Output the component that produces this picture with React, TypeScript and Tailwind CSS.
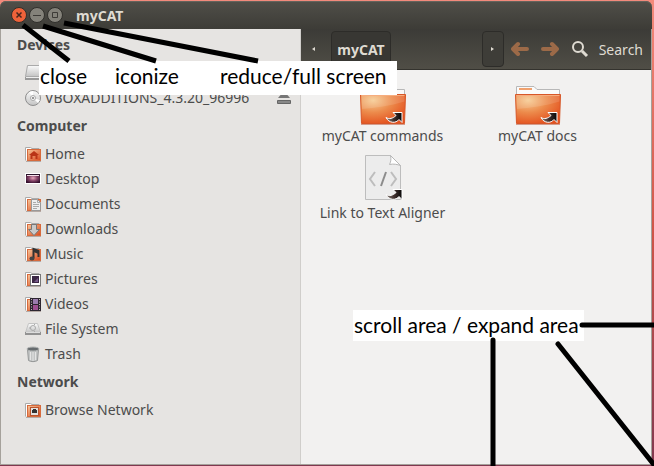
import type { ReactNode } from "react";

type Glyph = "home" | "desktop" | "documents" | "downloads" | "music" | "pictures" | "videos" | "disk" | "trash" | "network" | "drive" | "disc";

const computer: { label: string; icon: Glyph }[] = [
  { label: "Home", icon: "home" },
  { label: "Desktop", icon: "desktop" },
  { label: "Documents", icon: "documents" },
  { label: "Downloads", icon: "downloads" },
  { label: "Music", icon: "music" },
  { label: "Pictures", icon: "pictures" },
  { label: "Videos", icon: "videos" },
  { label: "File System", icon: "disk" },
  { label: "Trash", icon: "trash" },
];

function Gradients() {
  return (
    <svg className="absolute size-0" aria-hidden="true">
      <defs>
        <linearGradient id="smallFolder" x1="0" y1="0" x2="1" y2="1">
          <stop offset="0" stopColor="#f6c79b" />
          <stop offset="1" stopColor="#d9481c" />
        </linearGradient>
        <radialGradient id="folder" cx="0.28" cy="0.2" r="0.85">
          <stop offset="0" stopColor="#f6cb92" />
          <stop offset="0.5" stopColor="#ec8a4b" />
          <stop offset="1" stopColor="#e4521f" />
        </radialGradient>
        <linearGradient id="metal" x1="0" y1="0" x2="0" y2="1">
          <stop offset="0" stopColor="#fafafa" />
          <stop offset="1" stopColor="#c4c4c4" />
        </linearGradient>
        <radialGradient id="wallpaper" cx="0.5" cy="0.45" r="0.6">
          <stop offset="0" stopColor="#e9a9bd" />
          <stop offset="0.5" stopColor="#88466a" />
          <stop offset="1" stopColor="#35102d" />
        </radialGradient>
        <linearGradient id="linkArrow" x1="0" y1="0" x2="1" y2="0">
          <stop offset="0" stopColor="#8d8580" />
          <stop offset="0.5" stopColor="#40302d" />
          <stop offset="1" stopColor="#080808" />
        </linearGradient>
      </defs>
    </svg>
  );
}

function SmallFolder({ children }: { children: ReactNode }) {
  return (
    <>
      <path d="M.5 14.5V1.500h5l1.500 1h7v2" fill="#fff" stroke="#aaa" />
      <rect x="2.500" y="3.500" width="13" height="11" fill="url(#smallFolder)" stroke="#d76a3c" />
      <path d="M1 15.500h15" stroke="#b5aaa5" />
      {children}
    </>
  );
}

function PlaceIcon({ icon }: { icon: Glyph }) {
  let art: ReactNode = null;
  if (icon === "home") art = <SmallFolder><path d="M4 9l5-4 5 4h-1.500v4h-2v-3h-3v3h-2V9z" fill="#b93416" /></SmallFolder>;
  if (icon === "documents")
    art = (
      <SmallFolder>
        <path d="M6.500 3.500h6l3 3v8h-9z" fill="#eee" stroke="#999" />
        <path d="M12.500 3.500v3h3M8 6.500h3M8 8.500h6M8 10.500h6M8 12.500h4" fill="none" stroke="#aaa" />
      </SmallFolder>
    );
  if (icon === "downloads") art = <SmallFolder><path d="M6.500 3.500h5v5h3L9 14.500 3.500 8.500h3z" fill="#c9c9c9" stroke="#777" /></SmallFolder>;
  if (icon === "music")
    art = (
      <SmallFolder>
        <path d="M8.500 12V3l5 2v6" fill="none" stroke="#333" strokeWidth="2" />
        <ellipse cx="7" cy="12.500" rx="2.500" ry="2" fill="#444" />
        <path d="M8.500 3l5 2v3l-5-2z" fill="#333" />
      </SmallFolder>
    );
  if (icon === "pictures")
    art = (
      <SmallFolder>
        <rect x="5.500" y="3.500" width="10" height="11" fill="#fff" stroke="#777" />
        <rect x="7" y="5" width="7" height="7" fill="#3b2745" />
        <path d="M9 11l4-4v4z" fill="#76598a" />
      </SmallFolder>
    );
  if (icon === "videos")
    art = (
      <SmallFolder>
        <rect x="5" y="2" width="11" height="13" fill="#2d2630" />
        <rect x="8" y="3" width="5" height="5" fill="#9a7cae" />
        <rect x="8" y="9" width="5" height="5" fill="#9d4f91" />
        <path d="M6.500 3v12M14.500 3v12" stroke="#c1b7bb" strokeDasharray="1 1.500" />
      </SmallFolder>
    );
  if (icon === "network")
    art = (
      <SmallFolder>
        <rect x="5.500" y="5.500" width="8" height="8" fill="#e4e2e0" stroke="#b9552f" />
        <path d="M8 7h3v1h1v3H7V8h1z" fill="#333" />
      </SmallFolder>
    );
  if (icon === "desktop")
    art = (
      <>
        <rect x="0" y="2" width="16" height="11" fill="#fff" />
        <rect x="1" y="3" width="14" height="9" fill="url(#wallpaper)" />
        <path d="M1 3.500h14" stroke="#29142a" />
        <path d="M2 4.500h12" stroke="#f4dfe8" />
      </>
    );
  if (icon === "disk")
    art = (
      <>
        <path d="M3.500 2.500h9l3 9H.5z" fill="url(#metal)" stroke="#c4c4c4" />
        <rect x="0" y="11" width="16" height="3" fill="#929292" />
        <path d="M1 11.500h14" stroke="#ddd" />
        <circle cx="8" cy="7" r="2.500" fill="none" stroke="#aaa" />
        <path d="M4 7h2m3-3l1-1m-1 7l1 1" stroke="#aaa" />
      </>
    );
  if (icon === "trash")
    art = (
      <>
        <path d="M2.500 3.500l1 11c2 1.500 7 1.500 9 0l1-11z" fill="#c2c4c4" stroke="#969898" />
        <path d="M5.500 6v8M8 6v9M10.500 6v8" stroke="#e4e4e4" />
        <ellipse cx="8" cy="3" rx="6" ry="2" fill="#666b6e" stroke="#b0b3b3" />
      </>
    );
  if (icon === "drive")
    art = (
      <>
        <path d="M2.500.5h12l1 11H.5z" fill="url(#metal)" stroke="#aaa" />
        <path d="M0 12h16v3H0z" fill="#999" />
        <path d="M1 12.500h14" stroke="#eee" />
      </>
    );
  if (icon === "disc")
    art = (
      <>
        <circle cx="8" cy="8" r="7.500" fill="url(#metal)" stroke="#8e8e8e" />
        <path d="M8 8L4 2l4-1zM8 8l5 5 2-3z" fill="#fff" />
        <circle cx="8" cy="8" r="2.500" fill="#f7f7f7" stroke="#aaa" />
        <circle cx="8" cy="8" r="1" fill="#777" />
      </>
    );
  return <svg className="size-4 shrink-0 overflow-visible" viewBox="0 0 16 16" aria-hidden="true">{art}</svg>;
}

function Heading({ children }: { children: ReactNode }) {
  return <h2 className="h-[31px] pl-4 text-[14px] leading-[31px] font-bold">{children}</h2>;
}

function Place({ label, icon }: { label: string; icon: Glyph }) {
  return (
    <li>
      <button type="button" className="flex h-[25px] w-full items-center gap-1 pl-6 text-left">
        <PlaceIcon icon={icon} />
        <span className="whitespace-nowrap">{label}</span>
      </button>
    </li>
  );
}

function LinkEmblem() {
  return (
    <path
      d="M34 34.500h9v10l-3-3c-3 4-10 4-13-2 3 2 7 1 10-2z"
      fill="url(#linkArrow)"
      stroke="#fff"
      strokeWidth="1"
    />
  );
}

function FolderIcon() {
  return (
    <svg className="h-12 w-12" viewBox="0 0 48 48" aria-hidden="true">
      <path d="M2.500 17V8.500H20l3 3h22.500V17" fill="#fafafa" stroke="#b8b8b8" />
      <path d="M5 11h13" stroke="#f0a16e" strokeWidth="2" />
      <path d="M1.500 16.500h45l-1 29h-43z" fill="url(#folder)" stroke="#d75728" />
      <path d="M2.500 17.500h43v6C31 28 16 30 3 31z" fill="#fff" opacity=".12" />
      <path d="M2.500 17.500h43" stroke="#f6ad7f" />
      <path d="M2 46.500h44" stroke="#b8492a" opacity=".5" />
      <LinkEmblem />
    </svg>
  );
}

function DocumentIcon() {
  return (
    <svg className="h-12 w-12" viewBox="0 0 48 48" aria-hidden="true">
      <path d="M6.500.5h25l10 10v34h-35z" fill="#ececec" stroke="#bdbdbd" />
      <path d="M31.500.5c1 4 0 7-1 9 4-1 8 0 11 1z" fill="#fff" stroke="#b7b7b7" />
      <path d="M16 17l-5 7 5 7M32 17l5 7-5 7" fill="none" stroke="#bdbdbd" strokeWidth="2" />
      <path d="M27 17l-5 14" stroke="#8c8c8c" strokeWidth="2" />
      <LinkEmblem />
    </svg>
  );
}

function FileItem({ label, children }: { label: string; children: ReactNode }) {
  return (
    <button type="button" className="flex h-[68px] flex-col items-center">
      {children}
      <span className="leading-5 whitespace-nowrap">{label}</span>
    </button>
  );
}

function TitleBar() {
  const circle = "flex size-4 items-center justify-center rounded-full border border-[#302f2b]";
  return (
    <header className="flex h-7 items-center gap-[2px] rounded-t-md bg-gradient-to-b from-[#504f49] to-[#3d3c37] pl-[11px] text-[#dfdbd2] shadow-[inset_0_1px_#64635c]">
      <button type="button" aria-label="Close" className={`${circle} bg-[#ee623a]`}>
        <svg className="size-2" viewBox="0 0 8 8"><path d="M1.500 1.500l5 5m0-5l-5 5" stroke="#47251d" strokeWidth="1.500" /></svg>
      </button>
      <button type="button" aria-label="Minimize" className={`${circle} bg-[#84827a]`}>
        <svg className="size-2" viewBox="0 0 8 8"><path d="M0 4.500h8" stroke="#3d3b37" /></svg>
      </button>
      <button type="button" aria-label="Maximize" className={`${circle} bg-[#84827a]`}>
        <svg className="size-2" viewBox="0 0 8 8"><path d="M1.500 1.500h5v5h-5z" fill="none" stroke="#3d3b37" /></svg>
      </button>
      <h1 className="pl-[11px] text-[14px] font-bold">myCAT</h1>
    </header>
  );
}

function ToolArrow({ flip = false }: { flip?: boolean }) {
  return (
    <button type="button" aria-label={flip ? "Forward" : "Back"}>
      <svg className={flip ? "h-4 w-[18px] rotate-180" : "h-4 w-[18px]"} viewBox="0 0 18 16">
        <path d="M7 3L2 8l5 5M2 8h14" fill="none" stroke="#9c6a48" strokeWidth="4" strokeLinecap="round" strokeLinejoin="round" />
      </svg>
    </button>
  );
}

function Toolbar() {
  return (
    <div className="flex h-[41px] items-center border-b border-[#34332e] bg-gradient-to-b from-[#3c3b37] to-[#504e46] pr-2 text-[#dfdbd2]">
      <button type="button" aria-label="Parent folders" className="flex h-8 w-[24px] items-center justify-center">
        <svg className="h-1 w-[3px]" viewBox="0 0 3 4"><path d="M3 0v4L0 2z" fill="currentColor" /></svg>
      </button>
      <button type="button" className="ml-[6px] h-9 w-[60px] rounded border border-[#2d2c29] bg-[#383733] text-[14px] font-bold">myCAT</button>
      <button type="button" aria-label="Next folder" className="ml-auto flex h-9 w-[22px] items-center justify-center rounded border border-[#2d2c29] bg-[#3e3d38]">
        <svg className="h-1 w-[3px]" viewBox="0 0 3 4"><path d="M0 0v4l3-2z" fill="currentColor" /></svg>
      </button>
      <div className="ml-[7px] flex gap-3"><ToolArrow /><ToolArrow flip /></div>
      <button type="button" className="ml-3 flex items-center gap-[10px]">
        <svg className="h-[18px] w-[18px]" viewBox="0 0 18 18" fill="none" stroke="currentColor" strokeWidth="2">
          <circle cx="7" cy="7" r="5" /><path d="M11 11l5 5" strokeWidth="3" />
        </svg>
        <span>Search</span>
      </button>
    </div>
  );
}

export default function App() {
  return (
    <div className="relative flex min-h-screen flex-col overflow-hidden bg-gradient-to-b from-[#f38a7c] via-[#cf5548] to-[#80384f] pt-px pr-[2px] pb-px font-['Noto_Sans',sans-serif] text-[14px] text-[#4c4c4c]">
      <Gradients />
      <TitleBar />
      <div className="flex grow border-r border-b border-l border-[#a5a19b]">
        <nav aria-label="Places" className="w-[300px] shrink-0 border-r border-[#d0cecb] bg-[#e6e4e2]">
          <Heading>Devices</Heading>
          <ul>
            <li>
              <button type="button" aria-label="Drive" className="flex h-[25px] w-full items-center pl-6">
                <PlaceIcon icon="drive" />
              </button>
            </li>
            <li className="flex h-[25px] items-center pr-2">
              <button type="button" className="flex grow items-center gap-1 pl-6 text-left">
                <PlaceIcon icon="disc" />
                <span>VBOXADDITIONS_4.3.20_96996</span>
              </button>
              <button type="button" aria-label="Eject">
                <svg className="h-4 w-4" viewBox="0 0 16 16"><path d="M8 1l6 7H2z" fill="#777" /><path d="M1.500 10.500h13v3h-13z" fill="#888" stroke="#666" /></svg>
              </button>
            </li>
          </ul>
          <Heading>Computer</Heading>
          <ul>{computer.map((place) => <Place key={place.label} label={place.label} icon={place.icon} />)}</ul>
          <Heading>Network</Heading>
          <ul><Place label="Browse Network" icon="network" /></ul>
        </nav>
        <main className="flex min-w-0 grow flex-col bg-[#f2f1f0]">
          <Toolbar />
          <div className="grid grid-cols-[repeat(auto-fill,155px)] gap-y-[9px] pt-2 pl-1">
            <FileItem label="myCAT commands"><FolderIcon /></FileItem>
            <FileItem label="myCAT docs"><FolderIcon /></FileItem>
            <FileItem label="Link to Text Aligner"><DocumentIcon /></FileItem>
          </div>
        </main>
      </div>

      <div className="absolute top-[61px] left-[39px] flex h-[34px] w-[358px] bg-white pl-px font-['Lato',sans-serif] text-[21px] leading-[30px] text-black">
        <span className="w-[75px]">close</span>
        <span className="w-[105px]">iconize</span>
        <span className="whitespace-nowrap">reduce/full screen</span>
      </div>
      <div className="absolute top-[310px] left-[353px] h-[31px] w-[231px] bg-white pl-px font-['Lato',sans-serif] text-[21px] leading-[30px] whitespace-nowrap text-black">
        scroll area / expand area
      </div>
      <svg className="pointer-events-none absolute top-0 left-0 h-[466px] w-[654px]" viewBox="0 0 654 466" fill="none" stroke="#000" strokeWidth="5" aria-hidden="true">
        <path d="M23 25l46 36M43 26l113 35M64 23l194 38" />
        <path d="M582 325h74M493 340v128M558 344l97 122" strokeLinecap="round" />
      </svg>
    </div>
  );
}
